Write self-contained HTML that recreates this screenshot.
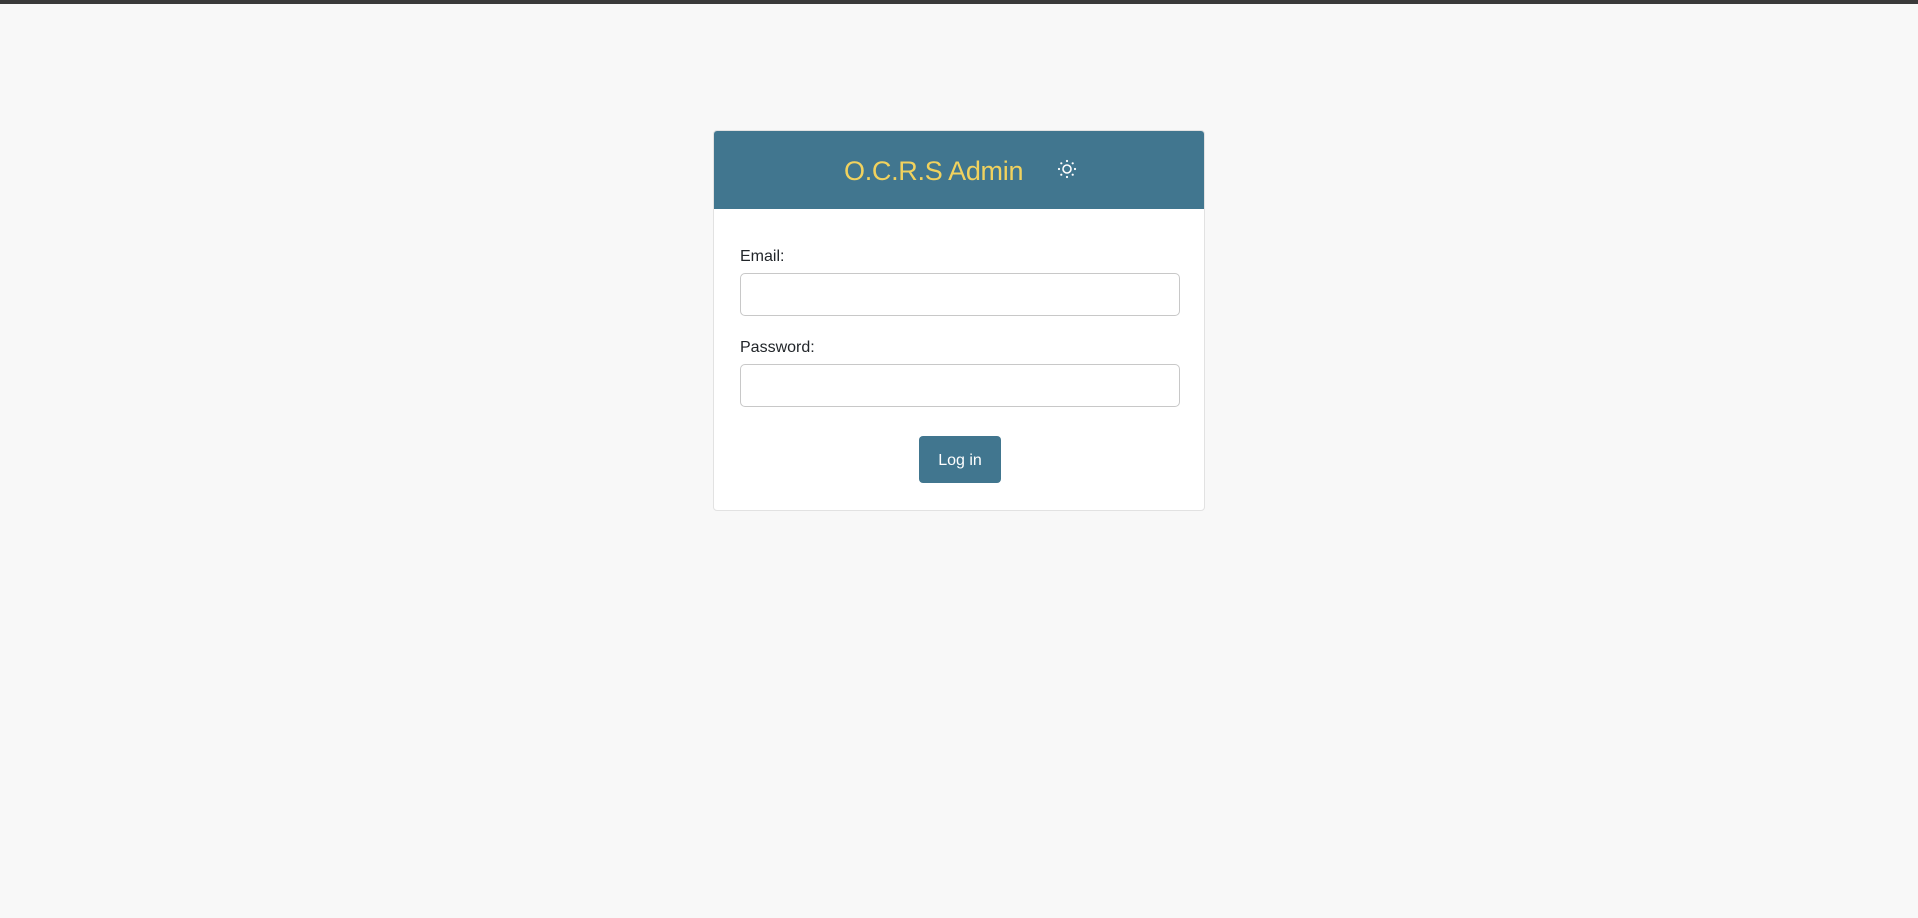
<!DOCTYPE html>
<html><head><style>
html,body{margin:0;padding:0}
body{width:1918px;height:918px;background:#f8f8f8;position:relative;overflow:hidden;font-family:"Segoe UI","Liberation Sans",sans-serif;color:#212529}
.top{position:absolute;left:0;top:0;width:1918px;height:4px;background:#3a3a3a}
.card{position:absolute;left:713px;top:130px;width:490px;height:379px;background:#fff;border:1px solid #e2e2e2;border-radius:4px;overflow:hidden}
.hdr{position:absolute;left:0;top:0;width:100%;height:78px;background:#41768f}
.title{position:absolute;left:130px;top:25px;font-size:27px;color:#f1d25e;font-weight:300;letter-spacing:-0.3px;white-space:nowrap}
.sun{position:absolute;left:341px;top:26px}
label{position:absolute;left:26px;font-size:16px;color:#212529}
.in{position:absolute;left:26px;width:438px;height:41px;border:1px solid #c8c8c8;border-radius:5px;background:#fff}
.btn{position:absolute;left:205px;top:305px;width:82px;height:47px;background:#41768f;border-radius:4px;color:#fff;font-size:16px;text-align:center;line-height:49px}
</style></head><body>
<div class="top"></div>
<div class="card">
<div class="hdr">
<div class="title">O.C.R.S Admin</div>
<svg class="sun" width="24" height="24" viewBox="0 0 24 24"><circle cx="12" cy="12" r="4" fill="none" stroke="#fff" stroke-width="1.6"/><g fill="#fff"><circle cx="12" cy="4" r="1.1"/><circle cx="12" cy="20" r="1.1"/><circle cx="4" cy="12" r="1.1"/><circle cx="20" cy="12" r="1.1"/><circle cx="6.3" cy="6.3" r="1.1"/><circle cx="17.7" cy="6.3" r="1.1"/><circle cx="6.3" cy="17.7" r="1.1"/><circle cx="17.7" cy="17.7" r="1.1"/></g></svg>
</div>
<label style="top:117px">Email:</label>
<div class="in" style="top:142px"></div>
<label style="top:208px">Password:</label>
<div class="in" style="top:233px"></div>
<div class="btn">Log in</div>
</div>
</body></html>
